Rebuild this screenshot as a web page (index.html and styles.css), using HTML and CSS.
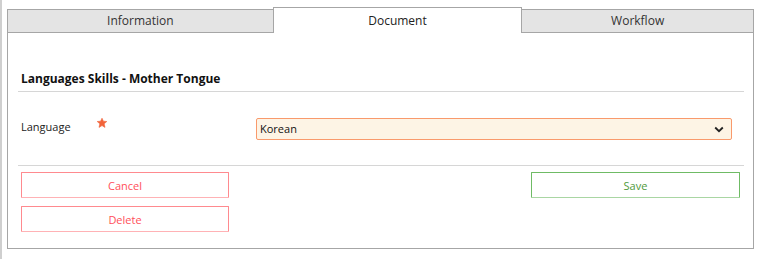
FILE: index.html
```html
<!DOCTYPE html>
<html lang="en">
<head>
    <meta charset="UTF-8">
    <title>Languages Skills</title>
    <link rel="stylesheet" href="styles.css">
</head>
<body>
    <div class="frame">
        <div class="tabs">
            <div class="tab tab-first">Information</div>
            <div class="tab tab-active">Document</div>
            <div class="tab tab-last">Workflow</div>
        </div>

        <div class="panel">
            <h2 class="section-title">Languages Skills - Mother Tongue</h2>

            <div class="form-row">
                <label class="field-label">Language</label>
                <span class="required">
                    <svg width="10" height="10" viewBox="0 0 10 10">
                        <polygon points="5,0.2 6.4,3.2 9.8,3.5 7.2,5.8 8,9.4 5,7.6 2,9.4 2.8,5.8 0.2,3.5 3.6,3.2" fill="#f2643a" stroke="#f2643a" stroke-width="0.6" stroke-linejoin="round"/>
                    </svg>
                </span>
                <div class="select">
                    <span class="select-value">Korean</span>
                    <svg class="select-arrow" width="10" height="7" viewBox="0 0 10 7">
                        <path d="M1.2 1.5 L5 5.2 L8.8 1.5" fill="none" stroke="#222" stroke-width="1.8"/>
                    </svg>
                </div>
            </div>

            <div class="actions">
                <div class="actions-left">
                    <button class="btn btn-danger">Cancel</button>
                    <button class="btn btn-danger">Delete</button>
                </div>
                <div class="actions-right">
                    <button class="btn btn-success">Save</button>
                </div>
            </div>
        </div>
    </div>
</body>
</html>
```

FILE: styles.css
```css
body {
    margin: 0;
    font-family: "Open Sans", "Noto Sans", sans-serif;
    background: #fff;
    color: #222;
}

.frame {
    border-left: 2px solid #cfcfcf;
    padding: 7px 0 0 5px;
    height: 252px;
}

.tabs {
    display: flex;
    width: 747px;
    height: 26px;
}

.tab {
    height: 22px;
    margin-top: 2px;
    line-height: 22px;
    font-size: 12px;
    text-align: center;
    color: #333;
    background: #e4e4e4;
    border-top: 1px solid #a6a6a6;
    border-bottom: 1px solid #a6a6a6;
}

.tab-first {
    width: 265px;
    border-left: 1px solid #a6a6a6;
}

.tab-active {
    width: 248px;
    height: 23px;
    margin-top: 0;
    padding-top: 2px;
    color: #222;
    background: #fff;
    border-left: 1px solid #a6a6a6;
    border-right: 1px solid #a6a6a6;
    border-bottom: none;
}

.tab-last {
    width: 231px;
    border-right: 1px solid #a6a6a6;
}

.panel {
    width: 726px;
    padding: 38px 9px 16px 10px;
    border: 1px solid #a6a6a6;
    border-top: none;
}

.section-title {
    margin: 0;
    padding: 0 0 4px 3px;
    font-size: 12px;
    line-height: 16px;
    font-weight: 700;
    color: #111;
    border-bottom: 1px solid #d6d6d6;
}

.form-row {
    display: grid;
    grid-template-columns: 76px 159px 1fr;
    align-items: start;
    padding: 26px 12px 25px 3px;
    border-bottom: 1px solid #d6d6d6;
}

.field-label {
    font-size: 11px;
    line-height: 18px;
    color: #222;
}

.required svg {
    display: block;
}

.select {
    display: flex;
    align-items: center;
    justify-content: space-between;
    height: 20px;
    padding: 0 7px 0 3px;
    background: #fdf4e5;
    border: 1px solid #f99a6c;
    border-radius: 2px;
}

.select-value {
    font-size: 11px;
    line-height: 20px;
    color: #111;
}

.actions {
    display: flex;
    justify-content: space-between;
    padding: 6px 4px 0 3px;
}

.actions-left,
.actions-right {
    display: flex;
    flex-direction: column;
    gap: 8px;
}

.btn {
    box-sizing: border-box;
    height: 26px;
    margin: 0;
    padding: 0;
    font-family: inherit;
    font-size: 11px;
    background: #fff;
    border: 1px solid;
    border-radius: 1px;
    cursor: pointer;
}

.btn-danger {
    width: 208px;
    color: #ff4f5a;
    border-color: #ff8a8f;
    border-bottom-color: #ffb2b5;
}

.btn-success {
    width: 209px;
    color: #4f9a3c;
    border-color: #6fbb65;
    border-bottom-color: #a9d6a3;
}
```
